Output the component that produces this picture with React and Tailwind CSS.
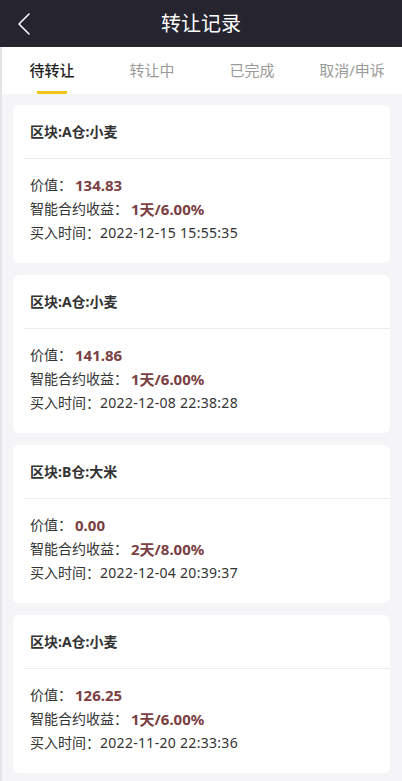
import { ChevronLeft } from "lucide-react";

const tabs = ["待转让", "转让中", "已完成", "取消/申诉"];

const records = [
  { title: "区块:A仓:小麦", value: "134.83", yield: "1天/6.00%", time: "2022-12-15 15:55:35" },
  { title: "区块:A仓:小麦", value: "141.86", yield: "1天/6.00%", time: "2022-12-08 22:38:28" },
  { title: "区块:B仓:大米", value: "0.00", yield: "2天/8.00%", time: "2022-12-04 20:39:37" },
  { title: "区块:A仓:小麦", value: "126.25", yield: "1天/6.00%", time: "2022-11-20 22:33:36" },
];

export default function App() {
  return (
    <div
      className="min-h-[781px] bg-[#f5f5f7] border-l-2 border-[#e4e4e8]"
      style={{ fontFamily: '"Noto Sans", "Noto Sans CJK SC", sans-serif' }}
    >
      {/* Header */}
      <div className="relative h-[47px] bg-[#25242f] flex items-center justify-center -ml-[2px]">
        <ChevronLeft className="absolute left-[4px] top-[4px] w-[40px] h-[40px] text-white" strokeWidth={0.9} />
        <h1 className="text-[20px] text-white leading-none">转让记录</h1>
      </div>

      {/* Tabs */}
      <div className="grid grid-cols-4 h-[47px] bg-white">
        {tabs.map((tab, i) => (
          <div key={tab} className="relative flex items-center justify-center">
            <span className={`text-[15px] ${i === 0 ? "text-[#222] font-medium" : "text-[#9a9a9a]"}`}>
              {tab}
            </span>
            {i === 0 && (
              <div className="absolute bottom-0 left-1/2 -translate-x-1/2 w-[30px] h-[3px] bg-[#f0c419]" />
            )}
          </div>
        ))}
      </div>

      {/* Records */}
      <div className="flex flex-col gap-[12px] pt-[11px] pl-[11px] pr-[12px] pb-[8px]">
        {records.map((r, i) => (
          <div key={i} className="bg-white rounded-[6px]">
            <div className="h-[53px] flex items-center pl-[17px] text-[14px] font-bold text-[#333]">
              {r.title}
            </div>
            <div className="ml-[11px] h-px bg-[#ececef]" />
            <div className="pt-[14px] pb-[18px] pl-[17px] text-[14px] text-[#333] leading-[24px]">
              <div className="flex items-center h-[24px]">
                <span>价值：</span>
                <span className="ml-[3px] text-[15px] font-bold text-[#7b4042]">{r.value}</span>
              </div>
              <div className="flex items-center h-[24px]">
                <span>智能合约收益：</span>
                <span className="ml-[3px] text-[15px] font-bold text-[#7b4042]">{r.yield}</span>
              </div>
              <div className="flex items-center h-[24px]">
                <span>买入时间：</span>
                <span className="tracking-[0.3px]">{r.time}</span>
              </div>
            </div>
          </div>
        ))}
      </div>
    </div>
  );
}
